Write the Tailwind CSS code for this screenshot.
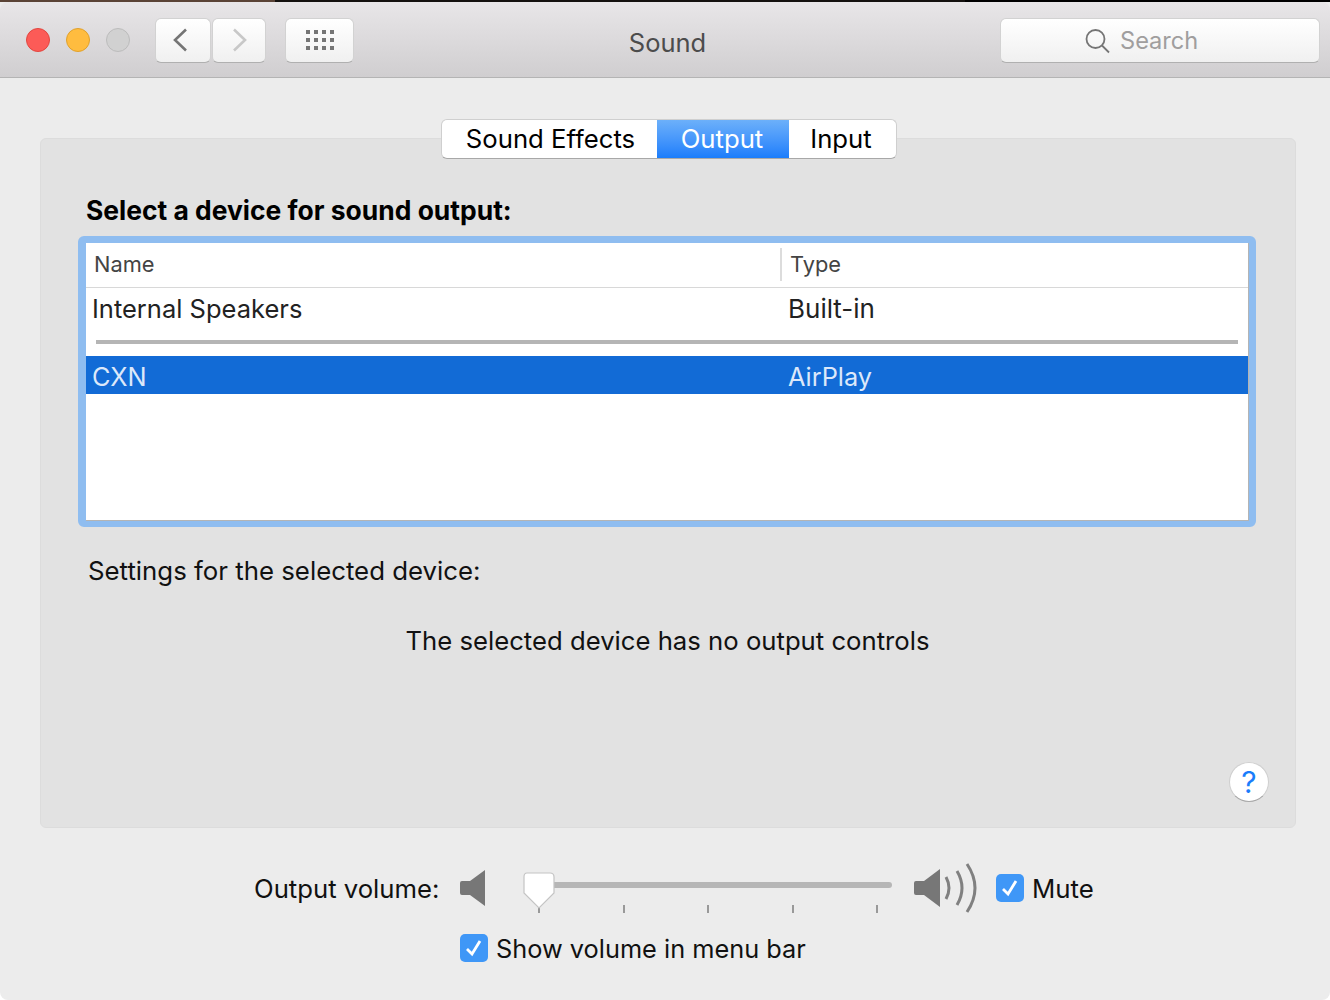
<!DOCTYPE html>
<html lang="en">

<head>
    <meta charset="UTF-8" />
    <title>Sound</title>
    <script src="https://cdn.jsdelivr.net/npm/@tailwindcss/browser@4"></script>
</head>

<body class="bg-white font-['Inter',sans-serif] text-[#111]">
    <div class="w-[1330px] h-[1000px] overflow-hidden flex flex-col bg-[#ececec] rounded-b-[8px]">
        <!-- desktop strip above the window -->
        <div class="flex h-[2px] shrink-0">
            <div class="w-[275px] bg-[#5a4336]"></div>
            <div class="w-[690px] bg-[#14110f]"></div>
            <div class="flex-1 bg-black"></div>
        </div>

        <!-- Title bar -->
        <div class="relative h-[76px] shrink-0 flex items-center pl-[26px] pr-[10px] pt-[1px] bg-gradient-to-b from-[#e8e6e8] to-[#d0ced0] border-b border-[#b4b4b4] rounded-t-[8px]">
            <div class="flex gap-[16px]">
                <span class="w-[24px] h-[24px] rounded-full bg-[#fc5b57] border border-[#e2463f]"></span>
                <span class="w-[24px] h-[24px] rounded-full bg-[#ffbc3f] border border-[#e0a12c]"></span>
                <span class="w-[24px] h-[24px] rounded-full bg-[#d1d1d1] border border-[#bcbcbc]"></span>
            </div>
            <div class="flex gap-[1px] ml-[25px]">
                <button class="w-[56px] h-[45px] flex items-center justify-center pr-[6px] rounded-[6px] bg-gradient-to-b from-white to-[#f0f0f0] border border-[#d2d2d2] border-b-[#b0b0b0]">
                    <svg width="16" height="24" viewBox="0 0 16 24" fill="none" stroke="#757575" stroke-width="2.6"><path d="M14 1.500 3 12 14 22.500" /></svg>
                </button>
                <button class="w-[54px] h-[45px] flex items-center justify-center pl-[2px] rounded-[6px] bg-gradient-to-b from-white to-[#f0f0f0] border border-[#d2d2d2] border-b-[#b0b0b0]">
                    <svg width="16" height="24" viewBox="0 0 16 24" fill="none" stroke="#c8c8c8" stroke-width="2.6"><path d="M2 1.500 13 12 2 22.500" /></svg>
                </button>
            </div>
            <button class="w-[69px] h-[45px] ml-[19px] flex items-center justify-center rounded-[6px] bg-gradient-to-b from-white to-[#f0f0f0] border border-[#d2d2d2] border-b-[#b0b0b0]">
                <span class="grid grid-cols-4 gap-x-[4px] gap-y-[4px]">
                    <i class="w-[4px] h-[4px] bg-[#757575]"></i><i class="w-[4px] h-[4px] bg-[#757575]"></i><i class="w-[4px] h-[4px] bg-[#757575]"></i><i class="w-[4px] h-[4px] bg-[#757575]"></i>
                    <i class="w-[4px] h-[4px] bg-[#757575]"></i><i class="w-[4px] h-[4px] bg-[#757575]"></i><i class="w-[4px] h-[4px] bg-[#757575]"></i><i class="w-[4px] h-[4px] bg-[#757575]"></i>
                    <i class="w-[4px] h-[4px] bg-[#757575]"></i><i class="w-[4px] h-[4px] bg-[#757575]"></i><i class="w-[4px] h-[4px] bg-[#757575]"></i><i class="w-[4px] h-[4px] bg-[#757575]"></i>
                </span>
            </button>
            <div class="flex-1 text-center text-[25.500px] text-[#4c4c4c] pr-[19px] pt-[7px]">Sound</div>
            <div class="w-[320px] h-[45px] flex items-center gap-[10px] pl-[83px] pt-[2px] rounded-[6px] bg-gradient-to-b from-white to-[#f0f0f0] border border-[#d2d2d2] border-b-[#b0b0b0]">
                <svg width="26" height="26" viewBox="0 0 26 26" fill="none" stroke="#757575" stroke-width="1.800"><circle cx="11.500" cy="11" r="9" /><path d="M18 17.500 25 24.500" /></svg>
                <span class="text-[23.600px] text-[#a09e9e]">Search</span>
            </div>
        </div>

        <!-- Tabs -->
        <div class="relative z-10 flex justify-center mt-[41px] pl-[8px]">
            <div class="flex h-[40px] w-[456px] text-[25.700px] leading-[38px] text-black bg-white rounded-[6px] border border-[#cfcfcf] border-b-[#a8a8a8] overflow-hidden">
                <div class="w-[215px] pl-[2px] text-center">Sound Effects</div>
                <div class="w-[132px] pr-[2px] text-center text-white bg-gradient-to-b from-[#6cb0fa] to-[#1a7dfb]">Output</div>
                <div class="flex-1 pr-[3px] text-center">Input</div>
            </div>
        </div>

        <!-- Panel -->
        <div class="relative -mt-[21px] mx-[40px] w-[1256px] h-[690px] shrink-0 bg-[#e2e2e2] border border-[#dcdcdc] rounded-[6px] pt-[53px] pl-[37px] pr-[39px]">
            <h2 class="font-bold text-[26.450px] leading-[36px] pl-[8px] text-black">Select a device for sound output:</h2>
            <div class="mt-[8px] w-[1178px] h-[291px] border-l-[8px] border-r-[7px] border-t-[7px] border-b-[6px] border-[#8fbdf0] rounded-[6px] bg-white">
                <div class="h-full flex flex-col border-r border-b border-[#b4b4b4]">
                    <div class="h-[45px] shrink-0 flex items-center pb-[2px] border-b border-[#d8d8d8] text-[21.800px] text-[#444]">
                        <div class="w-[696px] h-[33px] pl-[8px] leading-[33px] border-r-2 border-[#dcdcdc]">Name</div>
                        <div class="pl-[8px]">Type</div>
                    </div>
                    <div class="h-[43px] shrink-0 flex items-center text-[#222]">
                        <div class="w-[702px] pl-[6px] text-[25.500px]">Internal Speakers</div>
                        <div class="text-[26px] -mt-[2px]">Built-in</div>
                    </div>
                    <div class="h-[4px] mt-[9px] ml-[10px] mr-[10px] shrink-0 bg-[#b5b5b5]"></div>
                    <div class="h-[38px] mt-[12px] pt-[4px] shrink-0 flex items-center text-[25.300px] text-[#dce8fa] bg-[#126bd6]">
                        <div class="w-[702px] pl-[6px]">CXN</div>
                        <div>AirPlay</div>
                    </div>
                </div>
            </div>
            <p class="mt-[26px] pl-[10px] text-[25.800px] leading-[36px]">Settings for the selected device:</p>
            <p class="mt-[34px] pl-[1px] text-center text-[25.700px] leading-[36px]">The selected device has no output controls</p>
            <button class="absolute right-[26px] bottom-[25px] w-[40px] h-[40px] rounded-full bg-white border border-[#cfcfcf] border-b-[#a8a8a8] text-[#1a7dfb] text-[30px] leading-[36px] text-center">?</button>
        </div>

        <!-- Volume -->
        <div class="mt-[41px] h-[40px] shrink-0 flex items-center pl-[254px]">
            <span class="w-[206px] text-[25.700px]">Output volume:</span>
            <svg class="-mt-[2px]" width="26" height="38" viewBox="0 0 26 38" fill="#777"><path d="M2 12H10L25 1V37L10 26H2Q0 26 0 24V14Q0 12 2 12Z" /></svg>
            <div class="relative w-[428px] h-[40px] shrink-0">
                <!-- track -->
                <div class="absolute left-[54px] top-[13px] w-[352px] h-[6px] rounded-full bg-[#b6b6b6]"></div>
                <!-- ticks -->
                <i class="absolute left-[52px] top-[36px] w-[2px] h-[8px] bg-[#999]"></i>
                <i class="absolute left-[137px] top-[36px] w-[2px] h-[8px] bg-[#999]"></i>
                <i class="absolute left-[221px] top-[36px] w-[2px] h-[8px] bg-[#999]"></i>
                <i class="absolute left-[306px] top-[36px] w-[2px] h-[8px] bg-[#999]"></i>
                <i class="absolute left-[390px] top-[36px] w-[2px] h-[8px] bg-[#999]"></i>
                <!-- thumb -->
                <svg class="absolute left-[36px] top-[3px]" width="34" height="40" viewBox="0 0 34 40"><path d="M5 1H28Q32 1 32 5V21L17 36 2 21V5Q2 1 5 1Z" fill="#fff" stroke="#c4c4c4" stroke-width="1.200" /></svg>
            </div>
            <svg class="-mt-[3px] shrink-0" width="64" height="50" viewBox="0 0 64 50" fill="none"><path d="M2 18H10L26 6V44L10 32H2Q0 32 0 30V20Q0 18 2 18Z" fill="#777" /><path d="M32 14Q38 25 32 36M43 8Q53 25 43 42M53 1Q69 25 53 49" stroke="#808080" stroke-width="3" /></svg>
            <span class="ml-[18px] -mt-[2px] w-[28px] h-[28px] shrink-0 rounded-[5px] bg-[#3f97f7] flex items-center justify-center">
                <svg width="20" height="20" viewBox="0 0 20 20" fill="none" stroke="#fff" stroke-width="2.800"><path d="M3 11 8 16 16 3" /></svg>
            </span>
            <span class="ml-[8px] text-[25.800px]">Mute</span>
        </div>
        <div class="mt-[20px] h-[40px] shrink-0 flex items-center pl-[460px]">
            <span class="w-[28px] -mt-[2px] h-[28px] shrink-0 rounded-[5px] bg-[#3f97f7] flex items-center justify-center">
                <svg width="20" height="20" viewBox="0 0 20 20" fill="none" stroke="#fff" stroke-width="2.800"><path d="M3 11 8 16 16 3" /></svg>
            </span>
            <span class="ml-[8px] text-[25.350px]">Show volume in menu bar</span>
        </div>
    </div>
</body>

</html>
